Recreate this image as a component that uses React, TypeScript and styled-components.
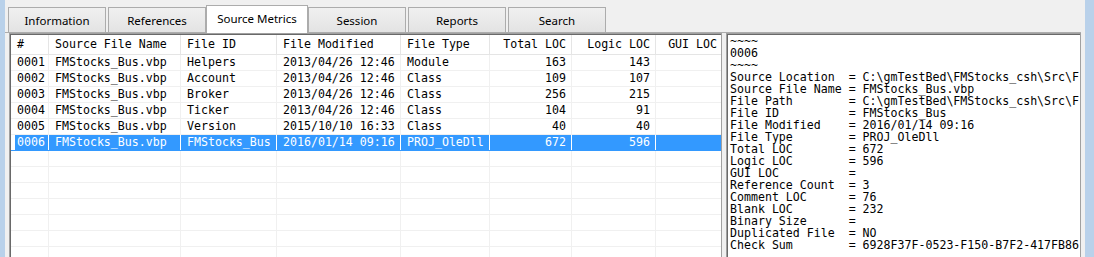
import React from "react";
import styled, { createGlobalStyle, css } from "styled-components";

const GlobalStyle = createGlobalStyle`
  html, body {
    margin: 0;
    padding: 0;
    background: #f0f0f0;
  }
`;

const mono = `"DejaVu Sans Mono", "Liberation Mono", monospace`;

const columns = [
  { title: "#", width: 38, right: false },
  { title: "Source File Name", width: 132, right: false },
  { title: "File ID", width: 96, right: false },
  { title: "File Modified", width: 124, right: false },
  { title: "File Type", width: 89, right: false },
  { title: "Total LOC", width: 82, right: true },
  { title: "Logic LOC", width: 84, right: true },
  { title: "GUI LOC", width: 67, right: true }
];

const gridTemplate = columns.map(c => `${c.width}px`).join(" ");

const rows = [
  ["0001", "FMStocks_Bus.vbp", "Helpers", "2013/04/26 12:46", "Module", "163", "143", ""],
  ["0002", "FMStocks_Bus.vbp", "Account", "2013/04/26 12:46", "Class", "109", "107", ""],
  ["0003", "FMStocks_Bus.vbp", "Broker", "2013/04/26 12:46", "Class", "256", "215", ""],
  ["0004", "FMStocks_Bus.vbp", "Ticker", "2013/04/26 12:46", "Class", "104", "91", ""],
  ["0005", "FMStocks_Bus.vbp", "Version", "2015/10/10 16:33", "Class", "40", "40", ""],
  ["0006", "FMStocks_Bus.vbp", "FMStocks_Bus", "2016/01/14 09:16", "PROJ_OleDll", "672", "596", ""]
];

const tabs = ["Information", "References", "Source Metrics", "Session", "Reports", "Search"];

// the detail pane is narrower than its lines; only what fits is kept
const details = [
  "~~~~",
  "0006",
  "~~~~",
  "Source Location  = C:\\gmTestBed\\FMStocks_csh\\Src\\F",
  "Source File Name = FMStocks_Bus.vbp",
  "File Path        = C:\\gmTestBed\\FMStocks_csh\\Src\\F",
  "File ID          = FMStocks_Bus",
  "File Modified    = 2016/01/14 09:16",
  "File Type        = PROJ_OleDll",
  "Total LOC        = 672",
  "Logic LOC        = 596",
  "GUI LOC          =",
  "Reference Count  = 3",
  "Comment LOC      = 76",
  "Blank LOC        = 232",
  "Binary Size      =",
  "Duplicated File  = NO",
  "Check Sum        = 6928F37F-0523-F150-B7F2-417FB86"
];

const Window = styled.div`
  display: flex;
  width: 1094px;
  height: 257px;
  overflow: hidden;
`;

const Frame = styled.div<{ $w: number }>`
  width: ${p => p.$w}px;
  flex: none;
  background: #b9d1ea;
`;

const Main = styled.div`
  flex: 1;
  display: flex;
  flex-direction: column;
  min-width: 0;
`;

const TabStrip = styled.div`
  display: flex;
  align-items: flex-end;
  gap: 2px;
  height: 32px;
  padding-left: 3px;
  margin-right: 4px;
  border-bottom: 1px solid #acacac;
`;

const Tab = styled.div<{ $active?: boolean }>`
  width: 98px;
  height: 25px;
  box-sizing: border-box;
  display: flex;
  align-items: center;
  justify-content: center;
  border: 1px solid #acacac;
  border-bottom: none;
  background: linear-gradient(#f0f0f0, #e3e3e3);
  font-family: "Segoe UI", "Noto Sans", sans-serif;
  font-size: 11.5px;
  color: #000;
  ${p =>
    p.$active &&
    css`
      position: relative;
      width: 102px;
      height: 28px;
      margin: 0 -2px -1px;
      padding-bottom: 3px;
      background: #ffffff;
      z-index: 1;
    `}
`;

const Panes = styled.div`
  flex: 1;
  display: flex;
  gap: 4px;
  padding: 0 4px;
  min-height: 0;
`;

const sunken = css`
  border: 1px solid #a0a0a0;
  box-shadow: inset 1px 1px 0 #696969;
  padding: 1px 0 0 1px;
  background: #ffffff;
  box-sizing: border-box;
`;

const GridBox = styled.div`
  ${sunken}
  width: 713px;
  height: 260px;
  overflow: hidden;
  font-family: ${mono};
  font-size: 11.6px;
  color: #000;
`;

const Row = styled.div<{ $head?: boolean; $selected?: boolean }>`
  display: grid;
  grid-template-columns: ${gridTemplate};
  height: ${p => (p.$head ? 20 : 16)}px;
  line-height: ${p => (p.$head ? 19 : 15)}px;
  border-bottom: 1px solid ${p => (p.$head ? "#e5e5e5" : "#f0f0f0")};
  box-sizing: border-box;
  ${p =>
    p.$selected &&
    css`
      color: #ffffff;
      border-bottom-color: #3399ff;
    `}
`;

const Cell = styled.div<{ $right?: boolean; $selected?: boolean; $first?: boolean }>`
  padding: 0 5px 0 6px;
  white-space: pre;
  overflow: hidden;
  text-align: ${p => (p.$right ? "right" : "left")};
  border-right: 1px solid #f0f0f0;
  ${p =>
    p.$selected &&
    css`
      background: #3399ff;
      border-right-color: #ffffff;
    `}
  ${p =>
    p.$selected &&
    p.$first &&
    css`
      box-shadow: inset 4px 0 0 #ffffff;
    `}
`;

const HeadCell = styled(Cell)`
  border-right-color: #e5e5e5;
`;

const DetailBox = styled.pre`
  ${sunken}
  flex: 1;
  margin: 0;
  padding: 1px 0 0 3px;
  height: 230px;
  overflow: hidden;
  font-family: ${mono};
  font-size: 11.6px;
  line-height: 12px;
  color: #000;
`;

export default function App() {
  const blanks = Array.from({ length: 8 }, () => columns.map(() => ""));
  return (
    <>
      <GlobalStyle />
      <Window>
        <Frame $w={5} />
        <Main>
          <TabStrip>
            {tabs.map(t => (
              <Tab key={t} $active={t === "Source Metrics"}>
                {t}
              </Tab>
            ))}
          </TabStrip>
          <Panes>
            <GridBox>
              <Row $head>
                {columns.map(c => (
                  <HeadCell key={c.title} $right={c.right}>
                    {c.title}
                  </HeadCell>
                ))}
              </Row>
              {rows.concat(blanks).map((r, i) => {
                const selected = i === 5;
                return (
                  <Row key={i} $selected={selected}>
                    {r.map((v, j) => (
                      <Cell key={j} $right={columns[j].right} $selected={selected} $first={j === 0}>
                        {v}
                      </Cell>
                    ))}
                  </Row>
                );
              })}
            </GridBox>
            <DetailBox>{details.join("\n")}</DetailBox>
          </Panes>
        </Main>
        <Frame $w={9} />
      </Window>
    </>
  );
}
